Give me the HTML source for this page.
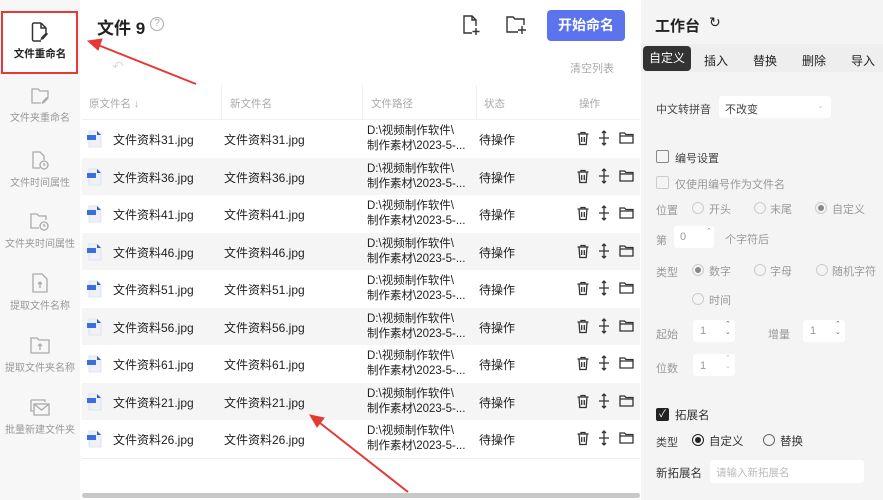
<!DOCTYPE html>
<html><head><meta charset="utf-8"><style>
*{margin:0;padding:0;box-sizing:border-box}
body{width:883px;height:500px;overflow:hidden;font-family:"Liberation Sans","Noto Sans CJK SC",sans-serif;background:#fff;position:relative;color:#222}
.side{position:absolute;left:0;top:0;width:80px;height:500px;background:#f7f7f7}
.si{position:absolute;left:0;width:80px;text-align:center;font-size:10px;color:#999}
.si svg{display:block;margin:0 auto 4px}
.sel{position:absolute;left:1px;top:11px;width:77px;height:63px;border:2px solid #e53935;background:#fff}
.main{position:absolute;left:80px;top:0;width:560px;height:500px;background:#fff}
.right{position:absolute;left:641px;top:0;width:242px;height:500px;background:#f4f4f4}
.t{position:absolute;white-space:nowrap}
.row{position:absolute;left:82px;width:558px;height:37.5px;font-size:12px}
.row.g{background:#f5f5f5}
.row span{position:absolute;top:11px}
.row .p{top:4px;font-size:11.5px;line-height:15px}
.fi{position:absolute;left:5px;top:10px;width:16px;height:18px}
.hd{position:absolute;top:96px;font-size:10.5px;color:#aaa}
.inp{position:absolute;background:#fff;border-radius:3px}
.rad{position:absolute;width:12px;height:12px;border:1px solid #ccc;border-radius:50%;background:#f4f4f4}
.rad.on::after{content:"";position:absolute;left:2px;top:2px;width:6px;height:6px;border-radius:50%;background:#888}
.rad.on2{border-color:#222}.rad.on2::after{content:"";position:absolute;left:2px;top:2px;width:6px;height:6px;border-radius:50%;background:#222}
.r{font-size:11px;color:#999}
.cb{position:absolute;width:13px;height:13px;border:1px solid #888;border-radius:2px}
</style></head><body>
<div class="side">
  <div class="sel"></div>
  <div class="si" style="top:22px;color:#222;font-weight:bold;font-size:10.5px"><svg width="18" height="20" viewBox="0 0 18 20" fill="none" stroke="#333" stroke-width="1.5"><path d="M10 1H3a1.5 1.5 0 0 0-1.5 1.5v15A1.5 1.5 0 0 0 3 19h7M10 1l5 5v5M10 1v5h5"/><path d="M16 12l-4 4.5-1.5.5.5-1.5 4-4z"/></svg>文件重命名</div>
  <div class="si" style="top:87px"><svg width="20" height="18" viewBox="0 0 20 18" fill="none" stroke="#aaa" stroke-width="1.3"><path d="M11 16H2V2h6l2 2h8v6"/><path d="M18 11l-4 4.5-1.5.5.5-1.5 4-4z"/></svg>文件夹重命名</div>
  <div class="si" style="top:150px"><svg width="20" height="20" viewBox="0 0 20 20" fill="none" stroke="#aaa" stroke-width="1.3"><path d="M10 18H3V2h7l4 4v4"/><circle cx="14" cy="15" r="4"/><path d="M14 13v2h1.5"/></svg>文件时间属性</div>
  <div class="si" style="top:211px"><svg width="22" height="20" viewBox="0 0 22 20" fill="none" stroke="#aaa" stroke-width="1.3"><path d="M10 17H2V3h6l2 2h7v4"/><circle cx="15" cy="15" r="4"/><path d="M15 13v2h1.5"/></svg>文件夹时间属性</div>
  <div class="si" style="top:273px"><svg width="18" height="20" viewBox="0 0 18 20" fill="none" stroke="#aaa" stroke-width="1.3"><path d="M2 1h9l5 5v13H2z"/><path d="M9 15V9M7 11l2-2 2 2"/></svg>提取文件名称</div>
  <div class="si" style="top:335px"><svg width="22" height="20" viewBox="0 0 22 20" fill="none" stroke="#aaa" stroke-width="1.3"><path d="M2 18V3h6l2 2h10v13z"/><path d="M11 15V9M9 11l2-2 2 2"/></svg>提取文件夹名称</div>
  <div class="si" style="top:397px"><svg width="22" height="20" viewBox="0 0 22 20" fill="none" stroke="#aaa" stroke-width="1.3"><path d="M2 3h14v2M2 3v11h2"/><rect x="5" y="7" width="15" height="11"/><path d="M5 7l7.5 6 7.5-6"/></svg>批量新建文件夹</div>
</div>
<div class="main"></div>
<div class="t" style="left:97px;top:14px;font-size:17px;font-weight:bold">文件 9</div>
<div class="t" style="left:150px;top:17px;width:14px;height:14px;border:1.3px solid #aaa;border-radius:50%;font-size:10px;color:#aaa;text-align:center;line-height:12px">?</div>
<div class="t" style="left:112px;top:58px;color:#ddd;font-size:14px">↶</div>
<svg class="t" style="left:462px;top:14px" width="18" height="22" viewBox="0 0 18 22" fill="none" stroke="#333" stroke-width="1.4"><path d="M10 19H2V2h8l4 4v6M10 2v4h4"/><path d="M14 14v7M10.5 17.5h7"/></svg>
<svg class="t" style="left:505px;top:15px" width="22" height="20" viewBox="0 0 22 20" fill="none" stroke="#333" stroke-width="1.4"><path d="M13 17H2V2h6l2 2h9v6"/><path d="M17 11v8M13 15h8"/></svg>
<div class="t" style="left:547px;top:10px;width:78px;height:31px;background:#5b73ec;border-radius:4px;color:#fff;font-size:14px;font-weight:bold;text-align:center;line-height:31px">开始命名</div>
<div class="t" style="left:570px;top:60px;font-size:11px;color:#aaa">清空列表</div>
<div class="t" style="left:82px;top:85px;width:558px;height:35px;border-bottom:1px solid #f0f0f0"></div>
<div class="hd" style="left:89px">原文件名 ↓</div>
<div class="hd" style="left:230px">新文件名</div>
<div class="hd" style="left:371px">文件路径</div>
<div class="hd" style="left:484px">状态</div>
<div class="hd" style="left:579px">操作</div>
<div class="t" style="left:221px;top:85px;width:1px;height:35px;background:#eee"></div>
<div class="t" style="left:362px;top:85px;width:1px;height:35px;background:#eee"></div>
<div class="t" style="left:476px;top:85px;width:1px;height:35px;background:#eee"></div>

<div id="rows"></div>
<script>
var n=["31","36","41","46","51","56","61","21","26"],h="";
n.forEach(function(x,i){
var top=120+i*37.5;
h+='<div class="row'+(i%2?' g':'')+'" style="top:'+top+'px"><svg class="fi" viewBox="0 0 16 18"><path d="M2 1h8l4 4v12H2z" fill="#eef1f7" stroke="#d8dde8" stroke-width=".8"/><path d="M10 1l4 4h-4z" fill="#2c5fd4"/><rect x="0" y="5" width="9" height="5" fill="#3a6fe0"/></svg>'+
'<span style="left:31px">文件资料'+x+'.jpg</span><span style="left:142px">文件资料'+x+'.jpg</span>'+
'<span class="p" style="left:285px">D:\\视频制作软件\\<br>制作素材\\2023-5-...</span><span style="left:397px">待操作</span>'+
'<svg style="position:absolute;left:494px;top:11px" width="14" height="15" viewBox="0 0 14 15" fill="none" stroke="#333" stroke-width="1.3"><path d="M1.5 3h11M5 3V1.5h4V3M3 3l.8 10.5h6.4L11 3M5.7 6v5M8.3 6v5"/></svg>'+
'<svg style="position:absolute;left:516px;top:10px" width="12" height="16" viewBox="0 0 12 16" fill="none" stroke="#333" stroke-width="1.3"><path d="M6 1v14M1 8h10M4 3l2-2 2 2M4 13l2 2 2-2"/></svg>'+
'<svg style="position:absolute;left:537px;top:11px" width="15" height="13" viewBox="0 0 15 13" fill="none" stroke="#333" stroke-width="1.3"><path d="M1 2h4.5l1.5 1.5h7V12H1zM1 5h13"/></svg></div>';
});
document.getElementById('rows').innerHTML=h;
</script>
<div class="t" style="left:82px;top:458px;width:558px;height:1px;background:#eee"></div>
<div class="t" style="left:82px;top:493px;width:558px;height:5px;background:#c8c8c8;border-radius:3px"></div>

<div class="right"></div>
<div class="t" style="left:655px;top:15px;font-size:15px;font-weight:bold">工作台</div>
<div class="t" style="left:709px;top:14px;font-size:14px">↻</div>
<div class="t" style="left:641px;top:44px;width:242px;height:28px;background:#eee"></div>
<div class="t" style="left:643px;top:46px;width:48px;height:25px;background:#333;border-radius:4px;color:#fff;font-size:12px;text-align:center;line-height:25px">自定义</div>
<div class="t" style="left:704px;top:52px;font-size:12px">插入</div>
<div class="t" style="left:753px;top:52px;font-size:12px">替换</div>
<div class="t" style="left:802px;top:52px;font-size:12px">删除</div>
<div class="t" style="left:851px;top:52px;font-size:12px">导入</div>
<div class="t r" style="left:656px;top:101px;color:#444">中文转拼音</div>
<div class="inp" style="left:719px;top:96px;width:112px;height:22px"></div>
<div class="t r" style="left:725px;top:101px;color:#444">不改变</div>
<div class="t" style="left:817px;top:101px;font-size:8px;color:#ccc">⌄</div>
<div class="cb" style="left:656px;top:150px"></div><div class="t r" style="left:675px;top:150px;color:#444">编号设置</div>
<div class="cb" style="left:656px;top:176px;border-color:#ccc"></div><div class="t r" style="left:675px;top:176px">仅使用编号作为文件名</div>
<div class="t r" style="left:656px;top:202px">位置</div>
<div class="rad" style="left:692px;top:202px"></div><div class="t r" style="left:709px;top:201px">开头</div>
<div class="rad" style="left:754px;top:202px"></div><div class="t r" style="left:770px;top:201px">末尾</div>
<div class="rad on" style="left:815px;top:202px"></div><div class="t r" style="left:832px;top:201px">自定义</div>
<div class="t r" style="left:656px;top:232px">第</div>
<div class="inp" style="left:674px;top:226px;width:40px;height:22px"></div><div class="t r" style="left:680px;top:231px">0</div><div class="t" style="left:706px;top:227px;font-size:7px;color:#999">⌃</div>
<div class="t r" style="left:725px;top:231px">个字符后</div>
<div class="t r" style="left:656px;top:264px">类型</div>
<div class="rad on" style="left:692px;top:264px"></div><div class="t r" style="left:709px;top:263px">数字</div>
<div class="rad" style="left:754px;top:264px"></div><div class="t r" style="left:770px;top:263px">字母</div>
<div class="rad" style="left:816px;top:264px"></div><div class="t r" style="left:832px;top:263px">随机字符</div>
<div class="rad" style="left:692px;top:293px"></div><div class="t r" style="left:709px;top:292px">时间</div>
<div class="t r" style="left:656px;top:326px">起始</div>
<div class="inp" style="left:693px;top:320px;width:42px;height:22px"></div><div class="t r" style="left:700px;top:325px">1</div><div class="t" style="left:725px;top:321px;font-size:7px;color:#666;line-height:8px">⌃<br>⌄</div>
<div class="t r" style="left:768px;top:326px">增量</div>
<div class="inp" style="left:803px;top:320px;width:42px;height:22px"></div><div class="t r" style="left:810px;top:325px">1</div><div class="t" style="left:835px;top:321px;font-size:7px;color:#666;line-height:8px">⌃<br>⌄</div>
<div class="t r" style="left:656px;top:360px">位数</div>
<div class="inp" style="left:693px;top:354px;width:42px;height:22px"></div><div class="t r" style="left:700px;top:360px">1</div><div class="t" style="left:725px;top:355px;font-size:7px;color:#bbb;line-height:8px">⌃<br>⌄</div>
<div class="cb" style="left:656px;top:408px;background:#222;border-color:#222;color:#fff;font-size:10px;line-height:11px;text-align:center">✓</div><div class="t" style="left:675px;top:407px;font-size:11.5px;color:#333">拓展名</div>
<div class="t r" style="left:656px;top:434px;color:#444">类型</div>
<div class="rad on2" style="left:692px;top:434px"></div><div class="t" style="left:709px;top:433px;font-size:11.5px;color:#333">自定义</div>
<div class="rad" style="left:763px;top:434px;border-color:#666"></div><div class="t" style="left:780px;top:433px;font-size:11.5px;color:#333">替换</div>
<div class="t" style="left:656px;top:465px;font-size:11.5px;color:#333">新拓展名</div>
<div class="inp" style="left:710px;top:460px;width:154px;height:23px"></div><div class="t" style="left:716px;top:465px;font-size:10.5px;color:#bbb">请输入新拓展名</div>

<svg class="t" style="left:0;top:0" width="883" height="500"><g stroke="#e53935" fill="#e53935"><line x1="196" y1="84" x2="98" y2="45" stroke-width="2"/><polygon points="88,41 102,39 98,50"/><line x1="408" y1="492" x2="320" y2="423" stroke-width="2"/><polygon points="310,415 324,418 317,427"/></g></svg>
</body></html>
